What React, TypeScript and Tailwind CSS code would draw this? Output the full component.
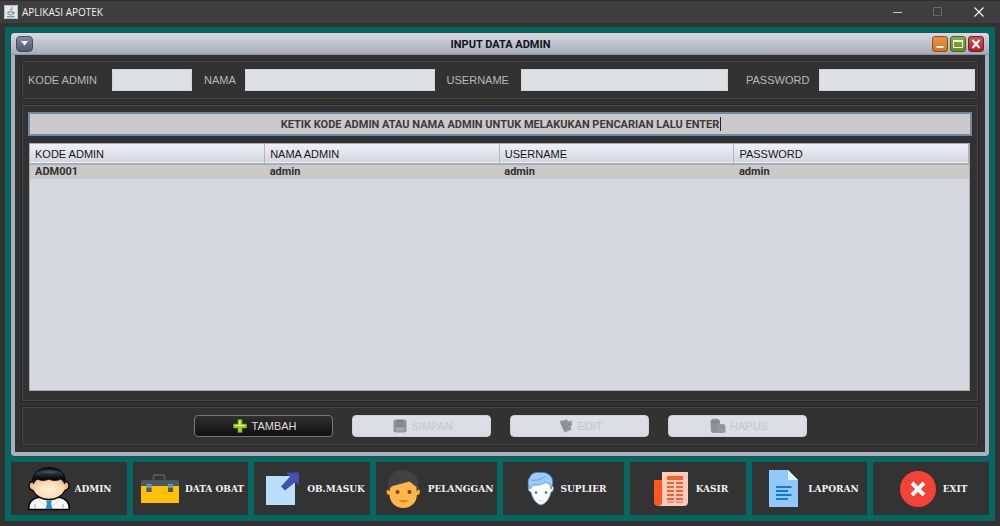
import type { ReactNode } from "react";

const FIELDS = [
  { id: "kode", label: "KODE ADMIN", labelClass: "w-[84px]", fieldClass: "flex-[79]" },
  { id: "nama", label: "NAMA", labelClass: "ml-3 w-[41px]", fieldClass: "flex-[190]" },
  { id: "username", label: "USERNAME", labelClass: "ml-3 w-[74px]", fieldClass: "flex-[208]" },
  { id: "password", label: "PASSWORD", labelClass: "ml-[18px] w-[73px]", fieldClass: "flex-[156]" },
];

const COLUMNS = ["KODE ADMIN", "NAMA ADMIN", "USERNAME", "PASSWORD"];
const ROWS = [["ADM001", "admin", "admin", "admin"]];

function JavaIcon() {
  return (
    <svg width="14" height="14" viewBox="0 0 14 14" aria-hidden="true">
      <rect width="14" height="14" rx="1" fill="#e4e9ec" />
      <rect x="0.5" y="0.5" width="13" height="13" rx="1" fill="none" stroke="#a9c0cc" />
      <path d="M7.6 1.8c.9 1.4-2 2.2-1 3.7M8.8 3.6c-1.2.6-1.6 1.2-1 2.2" stroke="#d9773c" fill="none" />
      <path d="M4 7h5.2v1.2c0 1-.8 1.6-2.6 1.6S4 9.2 4 8.2zM9.2 7.3c1.6-.3 1.5 1.5-.2 1.7" stroke="#56788c" strokeWidth=".9" fill="none" />
      <path d="M3 11.3c2 .8 5.600.8 7.600 0" stroke="#56788c" fill="none" />
    </svg>
  );
}

function AdminIcon() {
  return (
    <svg width="44" height="44" viewBox="0 0 44 44" aria-hidden="true">
      <defs>
        <radialGradient id="skin" cx=".5" cy=".6" r=".55">
          <stop offset="0" stopColor="#fff0dc" />
          <stop offset=".6" stopColor="#fddcb4" />
          <stop offset="1" stopColor="#eeae70" />
        </radialGradient>
        <linearGradient id="hair" x1="0" y1="0" x2="0" y2="1">
          <stop offset="0" stopColor="#0b1014" />
          <stop offset=".3" stopColor="#2c3a43" />
          <stop offset=".65" stopColor="#080c0f" />
          <stop offset="1" stopColor="#05080a" />
        </linearGradient>
      </defs>
      <path d="M2.500 42.500c0-7 2.500-10.500 9-12h23c6.500 1.500 9 5 9 12z" fill="#f7f8fa" stroke="#050505" strokeWidth="1.600" />
      <path d="M9 41v-4M37 41v-4" stroke="#a6adb6" />
      <path d="M14 31.500l9 2.500 9-2.500 1 2-6 4.500-4-3-4 3-6-4.500z" fill="#fff" stroke="#c2c8d2" strokeWidth=".6" />
      <path d="M20 33.500h6l-1 3 1.500 5.500h-7l1.500-5.500z" fill="#2f8dc3" />
      <path d="M7 14.500c-5 0-5.500 7.500 0 9C9.500 29 16 32.500 23 32.500S36.500 29 39 23.500c5.500-1.500 5-9 0-9L36 9H10z" fill="url(#skin)" stroke="#080808" strokeWidth="1.300" />
      <path d="M7.500 17C5 7 12 .8 23 .8S41 7 38.500 17c-.5-2.500-2-4-4-5-2 1.500-8 2-11.500 0-4 2-9 1.500-11 0-2.500 1-4 2.500-4.500 5z" fill="url(#hair)" stroke="#000" />
      <path d="M15 5c4-2.500 12-2.500 16 0-5 1.500-11 1.500-16 0z" fill="#8da1ac" opacity=".25" />
    </svg>
  );
}

function ToolboxIcon() {
  return (
    <svg width="44" height="44" viewBox="0 0 44 44" aria-hidden="true">
      <path d="M16.500 14V9.500q0-1.500 1.500-1.500h8q1.500 0 1.500 1.500V14" fill="none" stroke="#455a64" strokeWidth="2" />
      <path d="M4 18h38v18H4z" fill="#ffc107" />
      <path d="M6 13h34q2 0 2 2v4H4v-4q0-2 2-2z" fill="#455a64" />
      <path d="M9.500 17h5v8h-5zM31 17h5v8h-5z" fill="#78909c" />
      <path d="M9.500 21h5v4h-5zM31 21h5v4h-5z" fill="#455a64" />
    </svg>
  );
}

function ExportIcon() {
  return (
    <svg width="44" height="44" viewBox="0 0 44 44" aria-hidden="true">
      <path d="M7 9h29v29H7z" fill="#bbdefb" />
      <path d="M27 5.500h13v13l-3.500-3.500-10.500 8.500-4-4L31 9.500z" fill="#3f51b5" />
    </svg>
  );
}

function CustomerIcon() {
  return (
    <svg width="44" height="44" viewBox="0 0 44 44" aria-hidden="true">
      <circle cx="9.500" cy="25" r="3" fill="#ffa726" />
      <circle cx="37" cy="25" r="3" fill="#ffa726" />
      <path d="M9.500 12h27.500v15c0 8.500-6 14-13.700 14S9.500 35.500 9.500 27z" fill="#ffb74d" />
      <path d="M8 23C6.500 10 13 3 22 3c2 0 4 .4 5.500 1.300C35 5.500 39.500 11 38.300 23L36.500 24v-4l-7-5.500-17 4.500-2.500 2v3z" fill="#424242" />
      <circle cx="17.500" cy="25" r="2" fill="#784719" />
      <circle cx="29.500" cy="25" r="2" fill="#784719" />
      <path d="M19.500 33.500q4 3 8 0z" fill="#f57c00" stroke="#f57c00" />
    </svg>
  );
}

function SupplierIcon() {
  return (
    <svg width="36" height="44" viewBox="0 0 36 44" aria-hidden="true">
      <path d="M9 19c-3-1-2 6 1 6 1 6 5 12 10 13 5-1 9-7 10-13 3 0 3.500-7 .5-6V13H9z" fill="#fff" stroke="#4788c7" strokeWidth=".8" />
      <path d="M9 22C6 17 7 12 9 10c1-4 6-5 10-4.500 6-.8 12 2.500 12.500 8 .5 4-.5 6-1.500 8.500l-1-5c-2-.5-3-1-4-2-4 2.500-8 3.500-13 3z" fill="#98ccfd" stroke="#4788c7" strokeWidth=".8" />
      <path d="M10 13c6 1 11-1 14-4" stroke="#4788c7" strokeWidth=".6" fill="none" />
      <circle cx="15" cy="25.500" r="1.200" fill="#3f6181" />
      <circle cx="25" cy="25.500" r="1.200" fill="#3f6181" />
      <path d="M17.500 33q2.800 1.500 5.500 0" stroke="#b6dcfe" fill="none" />
    </svg>
  );
}

function CashierIcon() {
  return (
    <svg width="44" height="44" viewBox="0 0 44 44" aria-hidden="true">
      <path d="M6 13h10v26h-6q-4 0-4-4z" fill="#ff5722" />
      <path d="M14 5h26v30q0 4-4 4H10q4 0 4-4z" fill="#ffccbc" />
      <path d="M19 9h16v4H19zM19 15h7v2h-7zM28 15h7v2h-7zM19 19h7v2h-7zM28 19h7v2h-7zM19 23h7v2h-7zM28 23h7v2h-7zM19 27h7v2h-7zM28 27h7v2h-7zM19 31h7v2h-7zM28 31h7v2h-7zM19 34.500h7v1h-7zM28 34.500h7v1h-7z" fill="#f4622f" />
    </svg>
  );
}

function ReportIcon() {
  return (
    <svg width="44" height="44" viewBox="0 0 44 44" aria-hidden="true">
      <path d="M9 3h19l10 10v27H9z" fill="#90caf9" />
      <path d="M28 3l10 10H28z" fill="#e1f5fe" />
      <path d="M16 19h15.500v2H16zM16 23h12v2H16zM16 27h15.500v2H16zM16 31h12v2H16z" fill="#1976d2" />
    </svg>
  );
}

function ExitIcon() {
  return (
    <svg width="44" height="44" viewBox="0 0 44 44" aria-hidden="true">
      <circle cx="23" cy="22" r="18" fill="#f44336" />
      <path d="M17 16l12 12M29 16l-12 12" stroke="#fff" strokeWidth="4" />
    </svg>
  );
}

function PlusIcon() {
  return (
    <svg width="14" height="14" viewBox="0 0 14 14" aria-hidden="true">
      <path d="M5 .5h4V5h4.500v4H9v4.500H5V9H.5V5H5z" fill="#9fd21c" stroke="#6a9a0c" strokeWidth=".6" />
      <path d="M6 2h1.500v4H12v1H2V6h4z" fill="#dcf57c" />
    </svg>
  );
}

function SaveIcon() {
  return (
    <svg width="14" height="14" viewBox="0 0 14 14" aria-hidden="true">
      <rect x=".5" y=".5" width="13" height="13" rx="2" fill="#8f9193" />
      <path d="M3.500 1.500h7v4h-7z" fill="#85878a" />
      <path d="M3 8h8v4.500H3z" fill="#a2a4a7" />
      <path d="M4 2h6M3 7h8" stroke="#737577" />
    </svg>
  );
}

function EditIcon() {
  return (
    <svg width="14" height="14" viewBox="0 0 14 14" aria-hidden="true">
      <path d="M.5 2L8 .5l1 2L12.500 1.500l.5 5-1.500 1 1 3-7 3L3 8z" fill="#929497" />
      <path d="M3.500 4L6.500 9.500l4-5" fill="none" stroke="#85878a" />
    </svg>
  );
}

function DeleteIcon() {
  return (
    <svg width="16" height="16" viewBox="0 0 16 16" aria-hidden="true">
      <path d="M.5 3Q1 .8 5 .8T10 3v10q-1 2-5 2t-4-2z" fill="#8f9193" />
      <rect x="7" y="6" width="8.500" height="9" rx="2.500" fill="#97999b" />
      <path d="M1.500 3.500q3.500 2 7 0" stroke="#7a7c7f" fill="none" />
      <path d="M8 9q3 1.500 6 0" stroke="#85878a" fill="none" />
    </svg>
  );
}

const ACTIONS: { label: string; icon: ReactNode; enabled: boolean }[] = [
  { label: "TAMBAH", icon: <PlusIcon />, enabled: true },
  { label: "SIMPAN", icon: <SaveIcon />, enabled: false },
  { label: "EDIT", icon: <EditIcon />, enabled: false },
  { label: "HAPUS", icon: <DeleteIcon />, enabled: false },
];

const MENU: { label: string; icon: ReactNode }[] = [
  { label: "ADMIN", icon: <AdminIcon /> },
  { label: "DATA OBAT", icon: <ToolboxIcon /> },
  { label: "OB.MASUK", icon: <ExportIcon /> },
  { label: "PELANGGAN", icon: <CustomerIcon /> },
  { label: "SUPLIER", icon: <SupplierIcon /> },
  { label: "KASIR", icon: <CashierIcon /> },
  { label: "LAPORAN", icon: <ReportIcon /> },
  { label: "EXIT", icon: <ExitIcon /> },
];

function Panel({ className, children }: { className: string; children: ReactNode }) {
  return <section className={`border border-[#454545] outline outline-[#262626] ${className}`}>{children}</section>;
}

function TitleBar() {
  return (
    <header className="flex h-[23px] shrink-0 items-center border-t border-[#2e2e2e] bg-[#3d3e3d] pl-1 text-[#f0f0f0]">
      <JavaIcon />
      <h1 className="ml-1 flex-1 font-['Open_Sans','Noto_Sans',sans-serif] text-[10px] leading-4">APLIKASI APOTEK</h1>
      <button aria-label="Minimize" className="flex w-10 justify-center">
        <svg width="10" height="10" viewBox="0 0 10 10"><path d="M0 5.500h9" stroke="#c8c8c8" /></svg>
      </button>
      <button aria-label="Maximize" disabled className="flex w-10 justify-center">
        <svg width="10" height="10" viewBox="0 0 10 10"><path d="M.5.500h8v8h-8z" fill="none" stroke="#686868" /></svg>
      </button>
      <button aria-label="Close" className="mr-[1px] flex w-[41px] justify-center">
        <svg width="10" height="10" viewBox="0 0 10 10"><path d="M.5.500l9 9M9.500.500l-9 9" stroke="#f2f2f2" strokeWidth="1.200" /></svg>
      </button>
    </header>
  );
}

function FrameTitle() {
  return (
    <div className="-mx-1 flex h-[22px] shrink-0 items-center rounded-t-[2px] border-b border-[#8c90a0] bg-linear-to-b from-[#d8dae1] to-[#a9acbb] px-[5px]">
      <button aria-label="Window menu" className="flex h-4 w-[17px] items-center justify-center rounded-[4px] border border-[#414b61] bg-linear-to-b from-[#838b9d] to-[#4f596f]">
        <svg width="7" height="5" viewBox="0 0 7 5"><path d="M0 0h7L3.500 4.500z" fill="#fff" /></svg>
      </button>
      <h2 className="flex-1 pt-[2px] pl-9 text-center font-['Roboto','Liberation_Sans',sans-serif] text-[11px] font-bold leading-4 text-[#111318]">INPUT DATA ADMIN</h2>
      <div className="flex gap-[2px]">
        <button aria-label="Minimize frame" className="flex size-4 items-center justify-center rounded-[3px] border border-[#94491a] bg-linear-to-b from-[#e39550] to-[#d4740f]">
          <svg width="10" height="10" viewBox="0 0 10 10"><path d="M1.500 8h7" stroke="#fff" strokeWidth="2" /></svg>
        </button>
        <button aria-label="Maximize frame" className="flex size-4 items-center justify-center rounded-[3px] border border-[#47601a] bg-linear-to-b from-[#8faa50] to-[#64892a]">
          <svg width="10" height="10" viewBox="0 0 10 10"><path d="M.5 1.500h9v7h-9z" fill="none" stroke="#f2f8d2" /><path d="M0 2h10" stroke="#f2f8d2" strokeWidth="2" /></svg>
        </button>
        <button aria-label="Close frame" className="flex size-4 items-center justify-center rounded-[3px] border border-[#7b1d24] bg-linear-to-b from-[#c9575a] to-[#a81c22]">
          <svg width="10" height="10" viewBox="0 0 10 10"><path d="M1.500 1l7 8M8.500 1l-7 8" stroke="#fff" strokeWidth="2" /></svg>
        </button>
      </div>
    </div>
  );
}

function AdminTable() {
  return (
    <div className="mr-[2px] ml-[1px] mt-[7px] flex-1 border border-[#a6aab2] bg-[#d6d9e0]">
      <table className="w-full table-fixed border-collapse text-left text-[11px]">
        <thead>
          <tr className="h-5 border-b-2 border-[#a9adb8] bg-linear-to-b from-[#f0f1f7] to-[#d3d6de]">
            {COLUMNS.map((c) => (
              <th key={c} className="border-r border-[#b3b6c2] px-[5px] py-0 font-normal leading-4 text-[#15161c]">{c}</th>
            ))}
          </tr>
        </thead>
        <tbody>
          {ROWS.map((row) => (
            <tr key={row[0]} className="h-[15px] bg-[#cbcac9] text-[#303030]">
              {row.map((cell, i) => (
                <td key={COLUMNS[i]} className="px-[5px] py-0 font-['Roboto','Liberation_Sans',sans-serif] font-bold leading-[14px]">{cell}</td>
              ))}
            </tr>
          ))}
        </tbody>
      </table>
    </div>
  );
}

export default function App() {
  return (
    <div className="flex min-h-screen flex-col bg-[#323232] font-['Liberation_Sans',Arial,sans-serif]">
      <TitleBar />
      <div className="mx-[5px] mt-1 mb-[5px] flex flex-1 flex-col bg-[#046762] px-[6px] pt-[6px] pb-[6px]">
        <main className="flex flex-1 flex-col rounded-[3px] border-x-4 border-b-4 border-[#aab0be] bg-[#323232] outline outline-[#2c4a50]">
          <FrameTitle />
          <div className="flex flex-1 flex-col gap-[6px] px-[7px] pt-[6px] pb-[7px]">
            <Panel className="flex items-center py-[7px] pr-[2px] pl-[5px]">
              {FIELDS.map((f) => (
                <div key={f.id} className="contents">
                  <label htmlFor={f.id} className={`shrink-0 text-[11px] leading-4 text-[#b9b9b9] ${f.labelClass}`}>{f.label}</label>
                  <input id={f.id} type={f.id === "password" ? "password" : "text"} className={`h-[22px] min-w-0 border border-[#cfd2d6] bg-[#dde0e4] text-[11px] ${f.fieldClass}`} />
                </div>
              ))}
            </Panel>
            <Panel className="flex flex-1 flex-col px-[5px] pt-[6px] pb-[9px]">
              <div className="relative flex">
                <input
                  aria-label="Pencarian admin"
                  defaultValue="KETIK KODE ADMIN ATAU NAMA ADMIN UNTUK MELAKUKAN PENCARIAN LALU ENTER"
                  className="h-6 w-full border-2 border-[#7189a5] bg-[#cbcac9] text-center font-['Roboto','Liberation_Sans',sans-serif] text-[11px] font-bold text-[#3a3a3a] outline-none"
                />
                <span className="absolute top-[5px] left-[calc(50%+220px)] h-[14px] w-px bg-[#222]" />
              </div>
              <AdminTable />
            </Panel>
            <Panel className="flex justify-center gap-[19px] py-[7px]">
              {ACTIONS.map((a) => (
                <button
                  key={a.label}
                  disabled={!a.enabled}
                  className={`flex h-[22px] w-[139px] items-center justify-center gap-1 rounded-[4px] border pl-1 text-[11px] leading-4 ${
                    a.enabled
                      ? "border-[#777] bg-linear-to-b from-[#303030] to-[#101010] text-[#dedede]"
                      : "border-[#cfd2d9] bg-linear-to-b from-[#dcdfe4] to-[#d9dce5] text-[#c5c7ca]"
                  }`}
                >
                  {a.icon}
                  {a.label}
                </button>
              ))}
            </Panel>
          </div>
        </main>
        <nav className="mt-[6px] grid grid-cols-[116fr_115fr_116fr_121fr_121fr_116fr_115fr_116fr] gap-[6px]">
          {MENU.map((m) => (
            <button
              key={m.label}
              className="flex h-[53px] min-w-0 items-center justify-center gap-1 bg-[#333333] font-['DejaVu_Serif_Condensed','DejaVu_Serif',serif] text-[10px] font-bold leading-4 whitespace-nowrap text-[#f2f2f2]"
            >
              {m.icon}
              {m.label}
            </button>
          ))}
        </nav>
      </div>
    </div>
  );
}
